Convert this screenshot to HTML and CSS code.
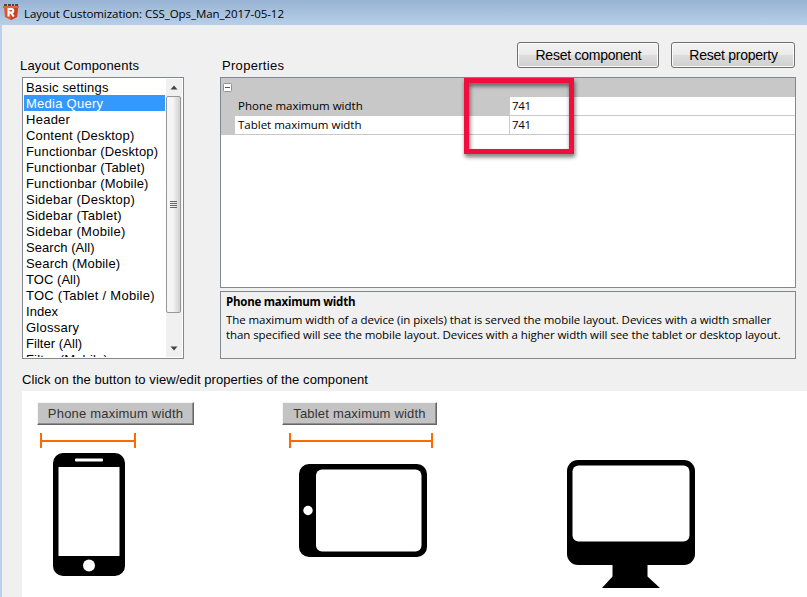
FILE: index.html
```html
<!DOCTYPE html>
<html lang="en">
<head>
<meta charset="utf-8">
<title>Layout Customization</title>
<link rel="stylesheet" href="styles.css">
</head>
<body>
<div class="window">
  <header class="titlebar">
    <svg class="logo" width="16" height="16" viewBox="0 0 16 16">
      <path d="M1 3h14l-1 10-6 3-6-3z" fill="#e2552b"/>
      <path d="M8 3h7l-1 10-6 3z" fill="#c8401c"/>
      <path d="M1 1h3M5 1h3M9 1h2M12 1h3" stroke="#2c2226" stroke-width="1.500"/>
      <path d="M0 2h16v2H0z" fill="#e0693c"/>
      <path d="M5.500 12.500V5h3a1.800 1.800 0 0 1 0 3.600h-3M8 8.600l2.800 4" fill="none" stroke="#fff" stroke-width="2"/>
    </svg>
    <span class="title">Layout Customization: CSS_Ops_Man_2017-05-12</span>
  </header>
  <main class="body">
    <div class="top">
      <section class="components">
        <h2 class="label">Layout Components</h2>
        <div class="listbox">
          <ul class="list">
            <li>Basic settings</li>
            <li class="selected wide">Media Query</li>
            <li class="wide">Header</li>
            <li>Content (Desktop)</li>
            <li>Functionbar (Desktop)</li>
            <li>Functionbar (Tablet)</li>
            <li>Functionbar (Mobile)</li>
            <li class="wide">Sidebar (Desktop)</li>
            <li class="wide">Sidebar (Tablet)</li>
            <li class="wide">Sidebar (Mobile)</li>
            <li class="snug">Search (All)</li>
            <li>Search (Mobile)</li>
            <li class="snug">TOC (All)</li>
            <li class="wide">TOC (Tablet / Mobile)</li>
            <li class="snug">Index</li>
            <li class="wide">Glossary</li>
            <li class="snug">Filter (All)</li>
            <li>Filter (Mobile)</li>
          </ul>
          <div class="scrollbar">
            <svg class="arrow" width="17" height="17" viewBox="0 0 17 17"><path d="M4.500 10.500h7L8 6.500z" fill="#444"/></svg>
            <div class="thumb"><i></i><i></i><i></i><i></i></div>
            <svg class="arrow down" width="17" height="17" viewBox="0 0 17 17"><path d="M4.500 6.500h7L8 10.500z" fill="#444"/></svg>
          </div>
        </div>
      </section>
      <section class="properties">
        <div class="props-head">
          <h2 class="label">Properties</h2>
          <div class="buttons">
            <button class="btn btn-comp">Reset component</button>
            <button class="btn btn-prop">Reset property</button>
          </div>
        </div>
        <div class="grid">
          <div class="group"><svg width="9" height="9" viewBox="0 0 9 9"><rect x=".5" y=".5" width="8" height="8" rx="1" fill="#fff" stroke="#919191"/><path d="M2 4.500h5" stroke="#3b55a0"/></svg></div>
          <div class="row active"><span class="name">Phone maximum width</span><span class="value">741</span></div>
          <div class="row"><span class="name">Tablet maximum width</span><span class="value">741</span></div>
          <div class="highlight"></div>
        </div>
        <div class="desc">
          <h3>Phone maximum width</h3>
          <p>The maximum width of a device (in pixels) that is served the mobile layout. Devices with a width smaller<br>than specified will see the mobile layout. Devices with a higher width will see the tablet or desktop layout.</p>
        </div>
      </section>
    </div>
    <p class="hint">Click on the button to view/edit properties of the component</p>
    <div class="canvas">
      <div class="device phone">
        <button class="tag">Phone maximum width</button>
        <svg class="measure" width="96" height="15" viewBox="0 0 96 15"><path d="M1 0v15M95 0v15M1 8h94" fill="none" stroke="#ff6a00" stroke-width="2"/></svg>
        <svg class="pic" width="72" height="123" viewBox="0 0 72 123"><rect width="72" height="123" rx="10"/><path d="M5.500 14h61v89h-61z" fill="#fff"/><rect x="22" y="5.500" width="28" height="3" rx="1" fill="#fff"/><circle cx="36" cy="112.500" r="6" fill="#fff"/></svg>
      </div>
      <div class="device tablet">
        <button class="tag">Tablet maximum width</button>
        <svg class="measure" width="144" height="15" viewBox="0 0 144 15"><path d="M1 0v15M143 0v15M1 8h142" fill="none" stroke="#ff6a00" stroke-width="2"/></svg>
        <svg class="pic" width="128" height="93" viewBox="0 0 128 93"><rect width="128" height="93" rx="10"/><rect x="17" y="5.500" width="105.500" height="82" rx="6" fill="#fff"/><circle cx="9" cy="46.500" r="4.700" fill="#fff"/></svg>
      </div>
      <div class="device desktop">
        <svg class="pic" width="128" height="128" viewBox="0 0 128 128"><rect width="128" height="105" rx="11"/><rect x="5.500" y="5.500" width="117" height="76" rx="6" fill="#fff"/><path d="M45.500 104h35v12.500L93 128H35l10.500-11.500z"/></svg>
      </div>
    </div>
  </main>
</div>
</body>
</html>
```
FILE: styles.css
```css
* { box-sizing: border-box; margin: 0; padding: 0; }
body { width: 807px; height: 597px; overflow: hidden; font: 13px "Liberation Sans", sans-serif; color: #000; }
svg { display: block; flex: none; }
.window { height: 597px; background: #b9d1ea; display: flex; flex-direction: column; }
.titlebar { height: 25px; flex: none; display: flex; align-items: center; padding-left: 3px; background: linear-gradient(#98b3d3, #b7cfe8); }
.logo { margin: 0 5px 1px 0; }
.title { font: 11.5px/16px "Open Sans", sans-serif; letter-spacing: -.06px; white-space: nowrap; padding-top: 2px; }
.body { flex: 1; margin-left: 2px; background: #f0f0f0; display: flex; flex-direction: column; }
.top { display: flex; height: 334px; padding-left: 20px; }
.components { width: 162px; margin-right: 36px; display: flex; flex-direction: column; }
.label { font-weight: normal; font-size: 13px; line-height: 16px; letter-spacing: .16px; white-space: nowrap; }
.components .label { padding-top: 33px; height: 52px; margin-left: -2px; }
.listbox { height: 282px; border: 1px solid #828790; background: #fff; display: flex; padding: 1px 0 1px 1px; overflow: hidden; }
.list { list-style: none; width: 141px; flex: none; overflow: hidden; }
.list li { height: 16px; line-height: 17px; padding-left: 2px; letter-spacing: .17px; white-space: nowrap; }
.list .wide { letter-spacing: .26px; }
.list .snug { letter-spacing: .05px; }
.list .selected { background: #3399ff; color: #fff; }
.scrollbar { width: 16px; background: #f0f0f0; margin-left: 1px; display: flex; flex-direction: column; }
.thumb { height: 217px; width: 15px; border: 1px solid #979797; border-radius: 2px; background: linear-gradient(90deg, #f5f5f5 45%, #d0d0d3); display: flex; flex-direction: column; gap: 1px; justify-content: center; align-items: center; flex: none; }
.thumb i { width: 7px; height: 1px; background: #666; }
.down { margin-top: auto; }
.properties { width: 576px; }
.props-head { height: 52px; display: flex; justify-content: space-between; padding: 17px 1px 0 2px; }
.props-head .label { padding-top: 16px; letter-spacing: .3px; }
.buttons { display: flex; gap: 12px; }
.btn { height: 26px; padding-left: 1px; border: 1px solid #707070; border-radius: 3px; background: linear-gradient(#f2f2f2, #ebebeb 48%, #dddddd 50%, #cfcfcf); box-shadow: inset 0 0 0 1px #fbfbfb; font: 14px "Liberation Sans", sans-serif; letter-spacing: -.25px; white-space: nowrap; }
.btn-comp { width: 142px; }
.btn-prop { width: 124px; }
.grid { position: relative; height: 211px; border: 1px solid #828790; background: #fff; font: 11.5px "Open Sans", sans-serif; }
.group { height: 19px; background: #c8c8c8; padding: 5px 0 0 2px; }
.row { height: 19px; display: flex; line-height: 18px; white-space: nowrap; border-left: 14px solid #c8c8c8; }
.name { width: 275px; padding-left: 3px; border-right: 1px solid #c8c8c8; border-bottom: 1px solid #c8c8c8; }
.value { flex: 1; padding-left: 2px; letter-spacing: -.3px; border-bottom: 1px solid #c8c8c8; }
.active .name { background: #c8c8c8; }
.highlight { position: absolute; left: 243px; top: 0; width: 110px; height: 76px; border: 5px solid #f20d3f; filter: drop-shadow(1px 3px 2px rgba(0,0,0,.55)); }
.desc { margin-top: 3px; height: 68px; border: 1px solid #828790; padding: 2px 5px; font: 11.5px/15px "Open Sans", sans-serif; letter-spacing: -.075px; white-space: nowrap; }
.desc h3 { font-size: 11.5px; line-height: 15px; letter-spacing: -.25px; margin-bottom: 3px; }
.hint { height: 32px; padding: 13px 0 0 20px; line-height: 16px; letter-spacing: .07px; white-space: nowrap; }
.canvas { flex: 1; margin-left: 20px; background: #fff; display: flex; }
.device { display: flex; flex-direction: column; align-items: flex-start; }
.phone { width: 246px; padding: 11px 0 0 15px; }
.tablet { width: 256px; padding: 11px 0 0 14px; }
.desktop { padding: 69px 0 0 43px; }
.tag { height: 23px; border: 1px solid; border-color: #f4f4f4 #666 #666 #f4f4f4; box-shadow: inset -1px -1px #8e8e8e; background: #c3c3c3; color: #333; font: 13px "Liberation Sans", sans-serif; letter-spacing: .2px; white-space: nowrap; }
.phone .tag { width: 157px; }
.tablet .tag { width: 155px; }
.measure { margin: 8px 0 0 3px; }
.tablet .measure { margin-left: 7px; }
.phone .pic { margin: 5px 0 0 16px; }
.tablet .pic { margin: 16px 0 0 17px; }
```
